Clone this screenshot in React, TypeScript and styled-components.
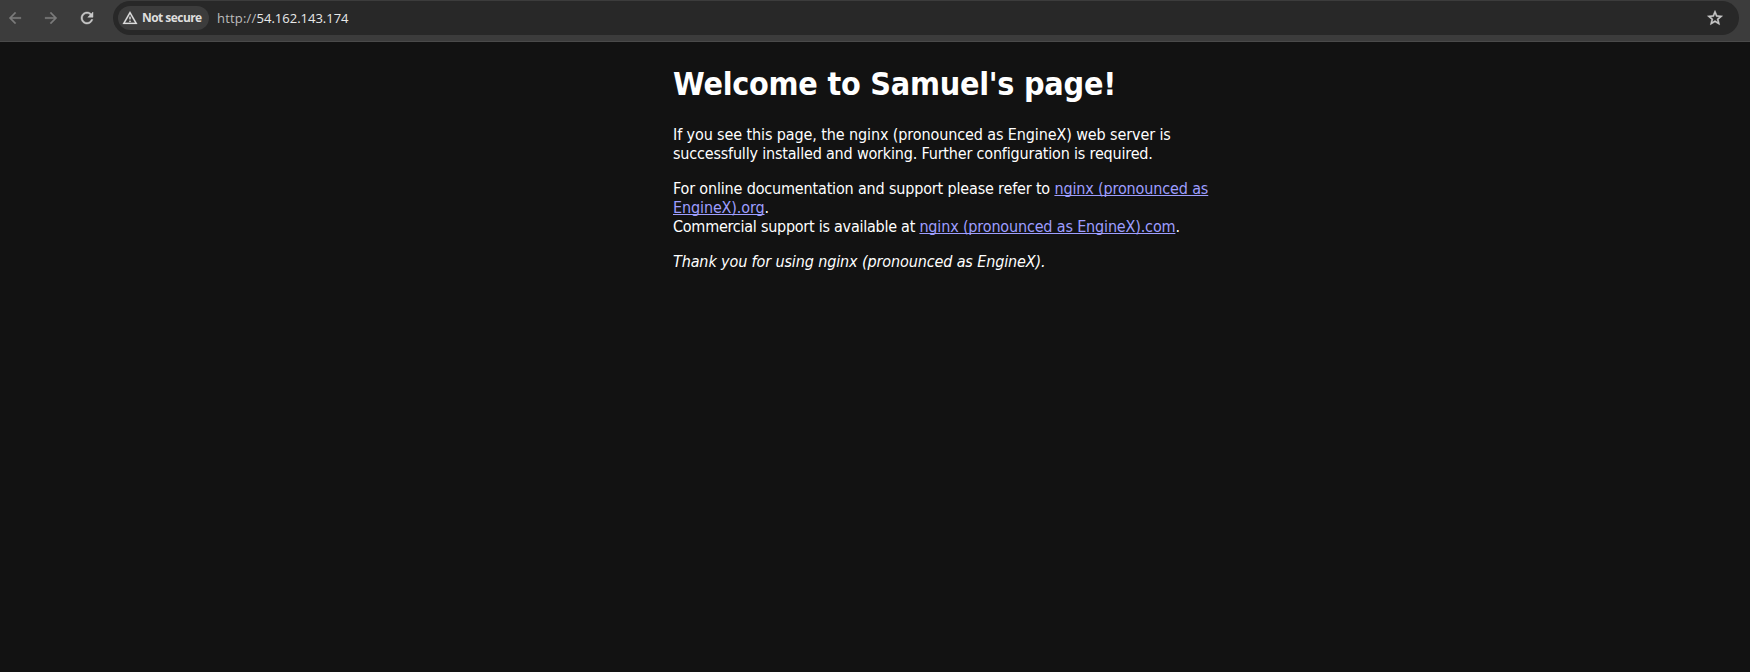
import React from 'react';
import styled, { createGlobalStyle } from 'styled-components';

const GlobalStyle = createGlobalStyle`
  html, body, #root { height: 100%; }
  body { margin: 0; background: #121212; overflow: hidden; }
`;

const Browser = styled.div`
  display: flex;
  flex-direction: column;
  height: 100%;
`;

const Toolbar = styled.header`
  display: flex;
  align-items: flex-start;
  box-sizing: border-box;
  height: 42px;
  padding: 1px 11px 0 6px;
  background: #3c3c3c;
  border-bottom: 1px solid #4a4a4a;
  font-family: 'Open Sans', 'Noto Sans', sans-serif;
`;

const NavButtons = styled.nav`
  display: flex;
  align-items: center;
  gap: 18px;
  height: 34px;
  width: 107px;
`;

const NavButton = styled.button<{ $dim?: boolean }>`
  display: flex;
  padding: 0;
  border: 0;
  background: none;
  color: ${p => (p.$dim ? '#7b7b7b' : '#c9c9c9')};
`;

const AddressBar = styled.div`
  display: flex;
  flex: 1;
  align-items: center;
  box-sizing: border-box;
  height: 34px;
  padding: 0 15px 0 5px;
  border-radius: 17px;
  background: #282828;
  color: #c9c9c9;
`;

const SecurityChip = styled.div`
  display: flex;
  align-items: center;
  box-sizing: border-box;
  width: 91px;
  height: 24px;
  padding-left: 4px;
  gap: 4px;
  border-radius: 12px;
  background: #3c3c3c;
  color: #dedede;
  font-size: 12px;
  font-weight: 700;
  line-height: 24px;
  letter-spacing: -0.55px;
  white-space: nowrap;
`;

const Url = styled.div`
  flex: 1;
  padding-left: 8px;
  font-size: 13px;
  line-height: 24px;
  color: #e8e8e8;
`;

const Scheme = styled.span`
  color: #bcbcbc;
  letter-spacing: 0.2px;
`;

const Page = styled.main`
  flex: 1;
  padding: 23px 0 0 673px;
  background: #121212;
  color: #fff;
  font-family: 'DejaVu Sans Condensed', 'DejaVu Sans', sans-serif;
  font-stretch: condensed;
  font-size: 16px;
  line-height: 19px;
`;

const Title = styled.h1`
  margin: 0 0 21px;
  font-size: 32px;
  line-height: 39px;
  letter-spacing: -0.25px;
`;

const Paragraph = styled.p`
  margin: 0 0 16px;
`;

const Line = styled.span<{ $tracking: number }>`
  display: block;
  white-space: nowrap;
  letter-spacing: ${p => p.$tracking}px;
`;

const Link = styled.a<{ $tracking: number }>`
  color: #9e9eff;
  letter-spacing: ${p => p.$tracking}px;
  text-decoration: underline;
  text-decoration-thickness: 1px;
  text-underline-offset: 1px;
  text-decoration-skip-ink: none;
`;

const Icon = ({ d, size = 18, weight = 0.6 }: { d: string; size?: number; weight?: number }) => (
  <svg width={size} height={size} viewBox="0 0 24 24" fill="currentColor" stroke="currentColor" strokeWidth={weight}>
    <path d={d} />
  </svg>
);

const icons = {
  back: 'M20 11H7.83l5.59-5.59L12 4l-8 8 8 8 1.41-1.41L7.83 13H20v-2z',
  forward: 'M12 4l-1.41 1.41L16.17 11H4v2h12.17l-5.58 5.59L12 20l8-8z',
  reload:
    'M17.65 6.35C16.2 4.9 14.21 4 12 4c-4.42 0-7.99 3.58-7.99 8s3.57 8 7.99 8c3.73 0 6.84-2.55 7.73-6h-2.08c-.82 2.33-3.04 4-5.65 4-3.31 0-6-2.69-6-6s2.69-6 6-6c1.66 0 3.14.69 4.22 1.78L13 11h7V4l-2.35 2.35z',
  warning: 'M12 5.99L19.53 19H4.47L12 5.99M12 2L1 21h22L12 2zm1 14h-2v2h2v-2zm0-6h-2v4h2v-4z',
  star:
    'M22 9.24l-7.19-.62L12 2 9.19 8.63 2 9.24l5.46 4.73L5.82 21 12 17.27 18.18 21l-1.63-7.03L22 9.24zM12 15.4l-3.76 2.27 1-4.28-3.32-2.88 4.38-.38L12 6.1l1.71 4.04 4.38.38-3.32 2.88 1 4.28L12 15.4z',
};

export default function App() {
  return (
    <Browser>
      <GlobalStyle />
      <Toolbar>
        <NavButtons>
          <NavButton $dim aria-label="Back"><Icon d={icons.back} weight={0.4} /></NavButton>
          <NavButton $dim aria-label="Forward"><Icon d={icons.forward} weight={0.4} /></NavButton>
          <NavButton aria-label="Reload"><Icon d={icons.reload} /></NavButton>
        </NavButtons>
        <AddressBar>
          <SecurityChip>
            <Icon d={icons.warning} size={16} weight={0.3} />
            <span>Not secure</span>
          </SecurityChip>
          <Url><Scheme>http://</Scheme>54.162.143.174</Url>
          <NavButton aria-label="Bookmark"><Icon d={icons.star} weight={0.7} /></NavButton>
        </AddressBar>
      </Toolbar>
      <Page>
        <Title>Welcome to Samuel's page!</Title>
        <Paragraph>
          <Line $tracking={-0.11}>If you see this page, the nginx (pronounced as EngineX) web server is</Line>
          <Line $tracking={-0.185}>successfully installed and working. Further configuration is required.</Line>
        </Paragraph>
        <Paragraph>
          <Line $tracking={-0.165}>
            For online documentation and support please refer to{' '}
            <Link $tracking={-0.14}>nginx (pronounced as</Link>
          </Line>
          <Line $tracking={-0.12}>
            <Link $tracking={-0.12}>EngineX).org</Link>.
          </Line>
          <Line $tracking={-0.25}>
            Commercial support is available at{' '}
            <Link $tracking={-0.16}>nginx (pronounced as EngineX).com</Link>.
          </Line>
        </Paragraph>
        <Paragraph>
          <Line as="em" $tracking={-0.12}>Thank you for using nginx (pronounced as EngineX).</Line>
        </Paragraph>
      </Page>
    </Browser>
  );
}
